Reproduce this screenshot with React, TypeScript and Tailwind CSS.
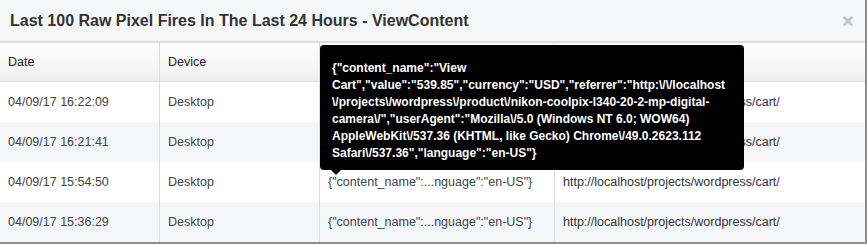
const rows = [
  { date: "04/09/17 16:22:09", device: "Desktop" },
  { date: "04/09/17 16:21:41", device: "Desktop" },
  { date: "04/09/17 15:54:50", device: "Desktop" },
  { date: "04/09/17 15:36:29", device: "Desktop" },
];

const tooltipLines = [
  '{"content_name":"View',
  'Cart","value":"539.85","currency":"USD","referrer":"http:\\/\\/localhost',
  '\\/projects\\/wordpress\\/product\\/nikon-coolpix-l340-20-2-mp-digital-',
  'camera\\/","userAgent":"Mozilla\\/5.0 (Windows NT 6.0; WOW64)',
  'AppleWebKit\\/537.36 (KHTML, like Gecko) Chrome\\/49.0.2623.112',
  'Safari\\/537.36","language":"en-US"}',
];

const App = () => {
  return (
    <div className="h-[244px] w-[867px] bg-[#8e8e8e] font-['Liberation_Sans',Arial,sans-serif] overflow-hidden">
      <div className="relative w-[865px] h-[241px] bg-white">
        <div className="h-[43px] bg-[#f5f6f7] border-b-2 border-[#dcdcdc] flex items-center justify-between pl-[10px] pr-[11px]">
          <h4 className="text-[16px] font-bold text-[#333]">
            Last 100 Raw Pixel Fires In The Last 24 Hours - ViewContent
          </h4>
          <span className="text-[21px] font-bold leading-none text-[#c2c2c2]">×</span>
        </div>

        <div className="grid grid-cols-[159px_160px_235px_1fr] text-[12.5px]">
          <div className="h-[39px] flex items-center pl-[8px] text-[#222] bg-gradient-to-b from-white to-[#efefef] border-b border-[#dcdcdc]">Date</div>
          <div className="h-[39px] flex items-center pl-[8px] text-[#222] bg-gradient-to-b from-white to-[#efefef] border-b border-l border-[#dcdcdc]">Device</div>
          <div className="h-[39px] flex items-center pl-[8px] text-[#222] bg-gradient-to-b from-white to-[#efefef] border-b border-l border-[#dcdcdc]">Data</div>
          <div className="h-[39px] flex items-center pl-[8px] text-[#222] bg-gradient-to-b from-white to-[#efefef] border-b border-l border-[#dcdcdc]">URL</div>
          {rows.map((r, i) => {
            const bg = i % 2 === 1 ? "bg-[#f5f6f8]" : "bg-white";
            return [
              <div key={`d${i}`} className={`h-[40px] flex items-center pl-[8px] text-[#444] ${bg}`}>{r.date}</div>,
              <div key={`v${i}`} className={`h-[40px] flex items-center pl-[8px] text-[#444] border-l border-[#dcdcdc] ${bg}`}>{r.device}</div>,
              <div key={`c${i}`} className={`h-[40px] flex items-center pl-[8px] text-[#444] border-l border-[#dcdcdc] ${bg}`}>
                {'{"content_name":...nguage":"en-US"}'}
              </div>,
              <div key={`u${i}`} className={`h-[40px] flex items-center pl-[8px] text-[#333] border-l border-[#dcdcdc] ${bg}`}>
                http://localhost/projects/wordpress/cart/
              </div>,
            ];
          })}
        </div>

        <div className="absolute left-[320px] top-[45px] w-[424px] h-[125px] bg-black rounded-[4px] pl-[12px] pt-[15px] text-white font-bold text-[12px] leading-[17px] whitespace-nowrap">
          {tooltipLines.map((l, i) => (
            <div key={i}>{l}</div>
          ))}
          <div className="absolute left-[11px] -bottom-[5px] w-0 h-0 border-l-[5px] border-r-[5px] border-t-[5px] border-l-transparent border-r-transparent border-t-black" />
        </div>
      </div>
    </div>
  );
};

export default App;
